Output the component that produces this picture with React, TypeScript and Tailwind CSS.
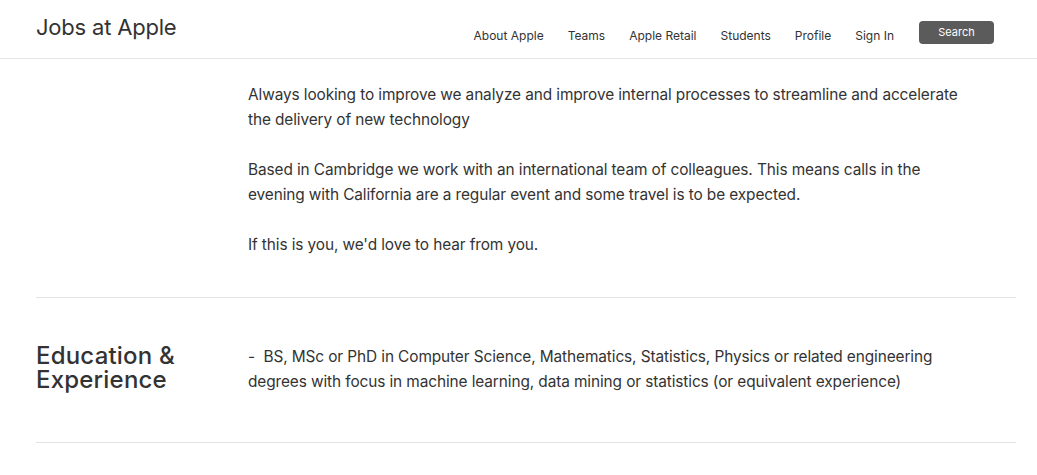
import React from "react";

const navItems = ["About Apple", "Teams", "Apple Retail", "Students", "Profile", "Sign In"];

export default function App() {
  return (
    <div className="min-h-screen bg-white text-[#333] font-['Inter','Noto_Sans',sans-serif]">
      {/* Header */}
      <header className="h-[59px] border-b border-[#e5e5e5] flex items-center justify-between pl-[36px] pr-[43px]">
        <h1 className="text-[22px] leading-none tracking-[-0.2px] -mt-[5px]">Jobs at Apple</h1>
        <nav className="flex items-center gap-[24px] text-[12px] text-[#333] pt-[13px]">
          {navItems.map((item) => (
            <a key={item} href="#" className="leading-none">
              {item}
            </a>
          ))}
          <button className="ml-[1px] -mt-[7px] w-[75px] h-[23px] rounded bg-[#5b5b5b] text-white text-[11px] leading-none">
            Search
          </button>
        </nav>
      </header>

      <main className="pl-[36px] pr-[21px]">
        {/* Description continued */}
        <section className="grid grid-cols-[212px_1fr] pt-[23px] pb-[40px] border-b border-[#e2e2e2]">
          <div />
          <div className="max-w-[728px] text-[15.4px] tracking-[-0.1px] leading-[25px] space-y-[25px]">
            <p>
              Always looking to improve we analyze and improve internal processes to streamline and
              accelerate the delivery of new technology
            </p>
            <p>
              Based in Cambridge we work with an international team of colleagues. This means calls in
              the evening with California are a regular event and some travel is to be expected.
            </p>
            <p>If this is you, we'd love to hear from you.</p>
          </div>
        </section>

        {/* Education */}
        <section className="grid grid-cols-[212px_1fr] pt-[46px] pb-[48px] border-b border-[#e2e2e2]">
          <h2 className="text-[24px] leading-[24px] text-[#333] font-medium tracking-[0.2px]">
            Education &amp;
            <br />
            Experience
          </h2>
          <div className="max-w-[728px] text-[15.4px] tracking-[-0.1px] leading-[25px]">
            <p>
              -&nbsp; BS, MSc or PhD in Computer Science, Mathematics, Statistics, Physics or related
              engineering degrees with focus in machine learning, data mining or statistics (or
              equivalent experience)
            </p>
          </div>
        </section>
      </main>
    </div>
  );
}
